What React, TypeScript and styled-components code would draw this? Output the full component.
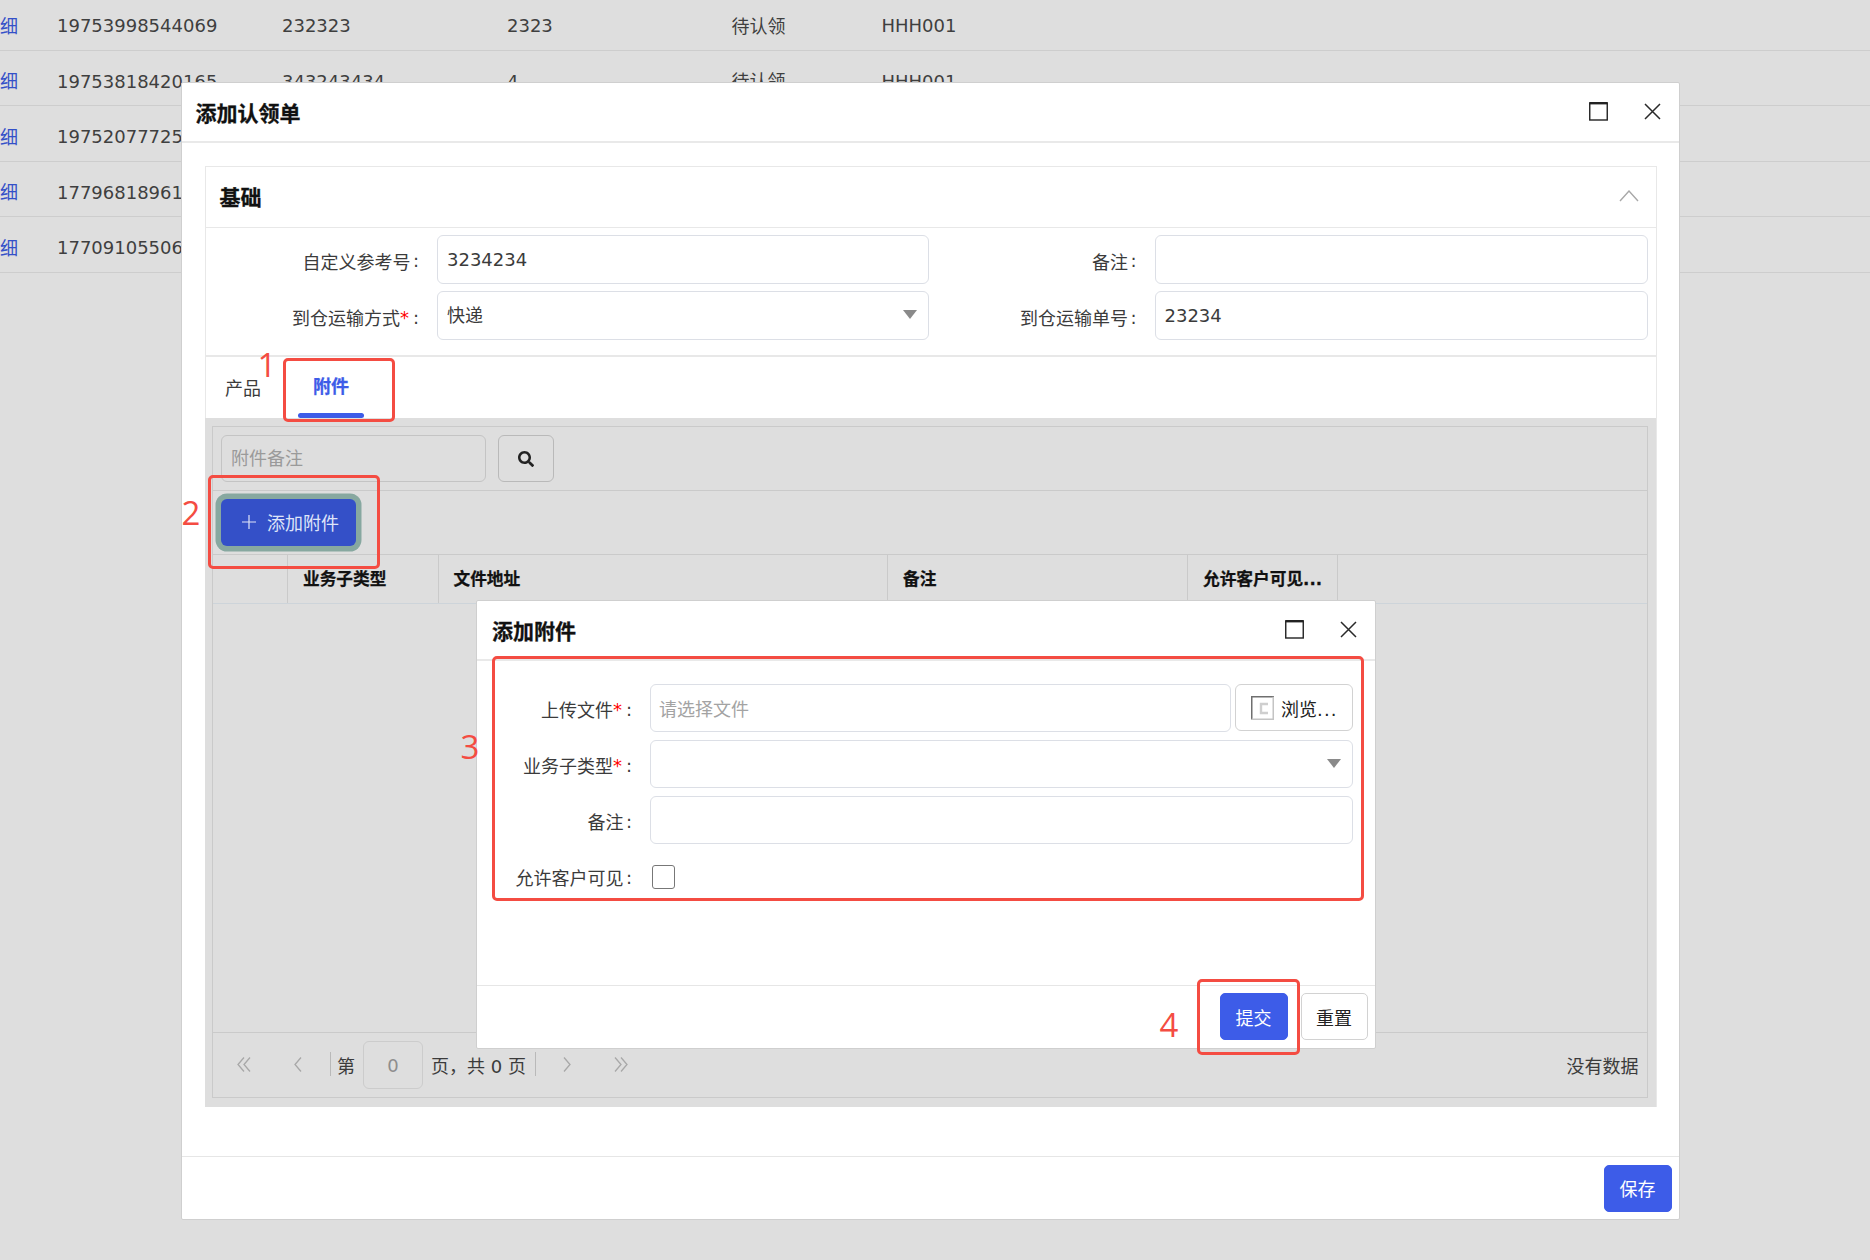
import React from "react";
import styled, { createGlobalStyle } from "styled-components";
import { FaSearch } from "react-icons/fa";

const FONT = `"DejaVu Sans", "Noto Sans CJK SC", sans-serif`;

const Global = createGlobalStyle`
  html, body { margin: 0; padding: 0; background: #dedede; }
  body { font-family: ${FONT}; font-size: 18px; color: #3b3b3b; }
  * { box-sizing: border-box; }
`;

const Page = styled.div`
  position: relative;
  width: 1870px;
  height: 1260px;
  overflow: hidden;
  background: #dedede;
`;

const BackList = styled.div`
  margin-top: -5px;
`;

const BackRow = styled.div`
  display: grid;
  grid-template-columns: 57px 225px 225px 224.5px 150px 1fr;
  align-items: center;
  height: 55.5px;
  padding-top: 7px;
  border-bottom: 1px solid #cdcdcd;
  font-size: 18px;
  color: #3f3f3f;
`;

const BackCjk = styled.span`
  margin-top: -2px;
`;

const BackLink = styled(BackCjk)`
  color: #3450c8;
`;

/* ---------- windows ---------- */
const MainWindow = styled.section`
  position: absolute;
  left: 180.5px;
  top: 81.5px;
  width: 1499px;
  height: 1138.5px;
  display: flex;
  flex-direction: column;
  background: #fff;
  border: 1px solid #cfcfcf;
  border-radius: 2px;
`;

const SubWindow = styled.section`
  position: absolute;
  left: 476px;
  top: 599.5px;
  width: 899.5px;
  height: 449px;
  display: flex;
  flex-direction: column;
  background: #fff;
  border: 1px solid #cfcfcf;
  border-radius: 2px;
`;

const WindowHeader = styled.header`
  flex: none;
  height: 60px;
  display: flex;
  align-items: center;
  padding: 0 18px 0 14px;
  border-bottom: 2px solid #e9e9e9;
`;

const WindowTitle = styled.h2`
  margin: 0;
  font-size: 21px;
  font-weight: 700;
  color: #111;
  -webkit-text-stroke: 0.3px #111;
`;

const SubTitle = styled(WindowTitle)`
  margin-left: 1px;
`;

const WindowTools = styled.div`
  margin-left: auto;
  display: flex;
  align-items: center;
  gap: 36px;
`;

const MainBody = styled.div`
  flex: 1;
  min-height: 0;
  padding: 23.5px 22px 0 23px;
`;

const WindowFooter = styled.footer`
  flex: none;
  height: 63px;
  display: flex;
  align-items: center;
  justify-content: flex-end;
  gap: 13px;
  padding: 0 7px;
  border-top: 1px solid #e6e6e6;
`;

const Button = styled.button<{ $primary?: boolean }>`
  width: ${(p) => (p.$primary ? "68px" : "67px")};
  height: 47px;
  padding: 0;
  font-family: ${FONT};
  font-size: 18px;
  border-radius: 5px;
  color: ${(p) => (p.$primary ? "#fff" : "#222")};
  background: ${(p) => (p.$primary ? "#3d5ce8" : "#fff")};
  border: 1px solid ${(p) => (p.$primary ? "#3d5ce8" : "#d2d2d2")};
`;

/* ---------- base panel ---------- */
const Panel = styled.div`
  border: 1px solid #e8e8e8;
  border-bottom: none;
`;

const PanelHeader = styled.div`
  height: 60.5px;
  display: flex;
  align-items: center;
  justify-content: space-between;
  padding: 0 17px 1px 14px;
  border-bottom: 1px solid #e8e8e8;
`;

const PanelTitle = styled.h3`
  margin: 0;
  font-size: 21px;
  font-weight: 700;
  color: #111;
  -webkit-text-stroke: 0.3px #111;
`;

const PanelForm = styled.div`
  display: grid;
  grid-template-columns: 231.5px 491.5px 226px 493px;
  grid-auto-rows: 48.6px;
  row-gap: 7.7px;
  padding: 7.5px 0 15.5px;
  border-bottom: 2px solid #e8e8e8;
`;

const Label = styled.label`
  display: flex;
  align-items: center;
  justify-content: flex-end;
  padding: 3px 18px 0 0;
  font-size: 18px;
  color: #3b3b3b;
  white-space: nowrap;
`;

const Req = styled.span`
  color: #f00;
  margin-right: 1.5px;
`;

const Colon = styled.span`
  margin-left: 2.5px;
`;

const TextInput = styled.input`
  width: 100%;
  height: 100%;
  padding: 0 9px;
  border: 1px solid #dcdfe6;
  border-radius: 6px;
  background: #fff;
  outline: none;
  font-family: ${FONT};
  font-size: 18px;
  color: #3b3b3b;
  &::placeholder { color: #a3a3a3; opacity: 1; }
`;

const FileInput = styled(TextInput)`
  padding: 3px 8px 0;
`;

const SelectBox = styled.div`
  position: relative;
  display: flex;
  align-items: center;
  height: 100%;
  padding: 0 9px 3px;
  border: 1px solid #dcdfe6;
  border-radius: 6px;
  background: #fff;
  font-size: 18px;
  color: #3b3b3b;
  &::after {
    content: "";
    position: absolute;
    right: 11px;
    top: 18px;
    border-left: 7px solid transparent;
    border-right: 7px solid transparent;
    border-top: 9px solid #8a8a8a;
  }
`;

/* ---------- tabs ---------- */
const TabStrip = styled.div`
  height: 61px;
  display: flex;
  gap: 22px;
  padding-left: 4.5px;
`;

const Tab = styled.div<{ $active?: boolean }>`
  position: relative;
  width: 66px;
  display: flex;
  align-items: center;
  justify-content: center;
  padding-bottom: ${(p) => (p.$active ? "5px" : "1px")};
  font-size: 18px;
  font-weight: ${(p) => (p.$active ? 700 : 400)};
  color: ${(p) => (p.$active ? "#3d5ce8" : "#3b3b3b")};
  ${(p) =>
    p.$active &&
    `-webkit-text-stroke: 0.25px #3d5ce8;
    &::after {
      content: "";
      position: absolute;
      left: 0;
      right: 0;
      bottom: 0;
      height: 5px;
      border-radius: 3px;
      background: #3d5ce8;
    }`}
`;

const TabPane = styled.div`
  width: 1451px;
  height: 689px;
  margin-left: -1px;
  padding: 8px 8px 9px 7.5px;
  background: #dedede;
`;

const Grid = styled.div`
  height: 100%;
  display: flex;
  flex-direction: column;
  border: 1px solid #cacaca;
`;

const SearchBar = styled.div`
  flex: none;
  height: 64px;
  display: flex;
  gap: 11.5px;
  padding: 8px 8px 0;
  border-bottom: 1px solid #cacaca;
`;

const SearchInput = styled.input`
  width: 265px;
  height: 47px;
  padding: 0 9px;
  background: transparent;
  border: 1px solid #c4c4c4;
  border-radius: 6px;
  outline: none;
  font-family: ${FONT};
  font-size: 18px;
  &::placeholder { color: #9a9a9a; opacity: 1; }
`;

const SearchButton = styled.button`
  width: 56px;
  height: 47px;
  display: flex;
  align-items: center;
  justify-content: center;
  background: transparent;
  border: 1px solid #b9b9b9;
  border-radius: 6px;
  color: #222;
`;

const ActionBar = styled.div`
  flex: none;
  height: 64px;
  display: flex;
  align-items: center;
  padding-left: 8px;
  border-bottom: 1px solid #cacaca;
`;

const AddButton = styled.button`
  width: 134.6px;
  height: 47px;
  display: flex;
  align-items: center;
  justify-content: flex-start;
  gap: 11px;
  padding: 0 0 1.5px 21px;
  background: #3450c8;
  border: none;
  border-radius: 6px;
  box-shadow: 0 0 0 5.5px #87a8a0;
  color: #dfe4f8;
  font-family: ${FONT};
  font-size: 18px;
`;

const HeadRow = styled.div`
  flex: none;
  height: 48.5px;
  display: grid;
  grid-template-columns: 75px 150.5px 449.5px 300px 150px 1fr;
  border-bottom: 1px solid #cdd4da;
`;

const HeadCell = styled.div`
  display: flex;
  align-items: center;
  padding: 0 0 2px 15px;
  border-right: 1px solid #cacaca;
  font-size: 16.7px;
  font-weight: 700;
  color: #111;
  -webkit-text-stroke: 0.25px #111;
  white-space: nowrap;
  overflow: hidden;
  &:last-child { border-right: none; }
`;

const GridBody = styled.div`
  flex: 1;
  min-height: 0;
`;

const Pager = styled.div`
  flex: none;
  height: 65px;
  display: flex;
  align-items: center;
  padding: 0 8px 0 4px;
  border-top: 1px solid #cacaca;
  font-size: 18px;
  color: #3b3b3b;
`;

const PagerButton = styled.span`
  width: 54px;
  height: 24px;
  margin-top: -2px;
  display: flex;
  align-items: center;
  justify-content: center;
  color: #a8a8a8;
`;

const PagerSep = styled.span<{ $tight?: boolean }>`
  width: 1px;
  height: 24px;
  margin: -2px ${(p) => (p.$tight ? "4px" : "6px")} 0 ${(p) => (p.$tight ? "0" : "5px")};
  background: #b9b9b9;
`;

const PageInput = styled.input`
  width: 60px;
  height: 48px;
  margin: 0 8px;
  padding: 0;
  text-align: center;
  background: transparent;
  border: 1px solid #cccccc;
  border-radius: 6px;
  outline: none;
  font-family: ${FONT};
  font-size: 18px;
  color: #8e8e8e;
`;

const PagerInfo = styled.span`
  white-space: nowrap;
  margin-right: 9.5px;
`;

const PagerStatus = styled.span`
  margin-left: auto;
`;

/* ---------- attachment form ---------- */
const SubForm = styled.div`
  flex: 1;
  min-height: 0;
  display: grid;
  grid-template-columns: 173px 702.5px;
  grid-auto-rows: 47.5px;
  row-gap: 8.5px;
  align-content: start;
  padding-top: 23.5px;
`;

const FileRow = styled.div`
  display: grid;
  grid-template-columns: 581px 117.5px;
  column-gap: 4px;
`;

const BrowseButton = styled.button`
  display: flex;
  align-items: center;
  gap: 7px;
  height: 47px;
  padding: 0 0 0 15px;
  background: #fff;
  border: 1px solid #d2d2d2;
  border-radius: 6px;
  font-family: ${FONT};
  font-size: 18px;
  color: #222;
  white-space: nowrap;
`;

const Dots = styled.span`
  letter-spacing: 1.2px;
`;

const CheckCell = styled.div`
  display: flex;
  align-items: flex-start;
  padding: 12.5px 0 0 1.5px;
`;

const Check = styled.input`
  appearance: none;
  width: 23.5px;
  height: 24px;
  margin: 0;
  background: #fff;
  border: 1px solid #777;
  border-radius: 3px;
`;

/* ---------- red annotations ---------- */
const Mark = styled.div<{ $x: number; $y: number; $w: number; $h: number }>`
  position: absolute;
  left: ${(p) => p.$x}px;
  top: ${(p) => p.$y}px;
  width: ${(p) => p.$w}px;
  height: ${(p) => p.$h}px;
  border: 3.5px solid #f44c42;
  border-radius: 5px;
  pointer-events: none;
`;

const MarkNo = styled.span<{ $x: number; $y: number }>`
  position: absolute;
  left: ${(p) => p.$x}px;
  top: ${(p) => p.$y}px;
  transform: translate(-50%, -50%);
  font-family: "Open Sans", sans-serif;
  font-size: 33px;
  line-height: 1;
  color: #f44c42;
  pointer-events: none;
`;

/* ---------- drawings ---------- */
const MaxIcon = () => (
  <svg width="19" height="19" viewBox="0 0 19 19" fill="none" stroke="#222">
    <rect x="0.75" y="1" width="17.5" height="17" strokeWidth="1.4" />
    <line x1="0.5" y1="1.2" x2="18.5" y2="1.2" strokeWidth="2.4" />
  </svg>
);

const CloseIcon = () => (
  <svg width="17" height="17" viewBox="0 0 17 17" fill="none" stroke="#2a2a2a" strokeWidth="1.5">
    <path d="M1 1 L16 16 M16 1 L1 16" />
  </svg>
);

const ChevronUp = () => (
  <svg width="20" height="12" viewBox="0 0 20 12" fill="none" stroke="#a8a8a8" strokeWidth="1.4">
    <path d="M1 11 L10 1 L19 11" />
  </svg>
);

const Chevron = ({ dir, double }: { dir: "l" | "r"; double?: boolean }) => (
  <svg width="14" height="15" viewBox="0 0 14 15" fill="none" stroke="currentColor" strokeWidth="1.3">
    {dir === "l" ? (
      <>
        <path d={double ? "M7 0.5 L1 7.5 L7 14.5" : "M10 0.5 L4 7.5 L10 14.5"} />
        {double && <path d="M13 0.5 L7 7.5 L13 14.5" />}
      </>
    ) : (
      <>
        <path d={double ? "M7 0.5 L13 7.5 L7 14.5" : "M4 0.5 L10 7.5 L4 14.5"} />
        {double && <path d="M1 0.5 L7 7.5 L1 14.5" />}
      </>
    )}
  </svg>
);

const PlusIcon = () => (
  <svg width="14" height="14" viewBox="0 0 14 14" stroke="#dfe4f8" strokeWidth="1.2">
    <path d="M7 0 V14 M0 7 H14" />
  </svg>
);

const FileIcon = () => (
  <svg width="23" height="24" viewBox="0 0 23 24" fill="none">
    <path d="M0.75 23.5 V0.75 H23" stroke="#6f6f6f" strokeWidth="1.5" />
    <path d="M22.25 0.75 V23.25 H0.75" stroke="#c4c4c4" strokeWidth="1.5" />
    <path d="M17 8 H10 V17 H17" stroke="#cfcfcf" strokeWidth="2.4" />
  </svg>
);

const rows = [
  ["19753998544069", "232323", "2323", "待认领", "HHH001"],
  ["19753818420165", "343243434", "4", "待认领", "HHH001"],
  ["19752077725148"],
  ["17796818961320"],
  ["17709105506217"],
];

export default function App() {
  return (
    <Page>
      <Global />
      <BackList>
        {rows.map((r) => (
          <BackRow key={r[0]}>
            <BackLink>细</BackLink>
            {r.map((c, i) => (i === 3 ? <BackCjk key={i}>{c}</BackCjk> : <span key={i}>{c}</span>))}
          </BackRow>
        ))}
      </BackList>

      <MainWindow>
        <WindowHeader>
          <WindowTitle>添加认领单</WindowTitle>
          <WindowTools>
            <MaxIcon />
            <CloseIcon />
          </WindowTools>
        </WindowHeader>
        <MainBody>
          <Panel>
            <PanelHeader>
              <PanelTitle>基础</PanelTitle>
              <ChevronUp />
            </PanelHeader>
            <PanelForm>
              <Label>
                自定义参考号<Colon>:</Colon>
              </Label>
              <TextInput readOnly value="3234234" />
              <Label>
                备注<Colon>:</Colon>
              </Label>
              <TextInput readOnly value="" />
              <Label>
                到仓运输方式<Req>*</Req>
                <Colon>:</Colon>
              </Label>
              <SelectBox>快递</SelectBox>
              <Label>
                到仓运输单号<Colon>:</Colon>
              </Label>
              <TextInput readOnly value="23234" />
            </PanelForm>
            <TabStrip>
              <Tab>产品</Tab>
              <Tab $active>附件</Tab>
            </TabStrip>
            <TabPane>
              <Grid>
                <SearchBar>
                  <SearchInput readOnly placeholder="附件备注" />
                  <SearchButton>
                    <FaSearch size={16} />
                  </SearchButton>
                </SearchBar>
                <ActionBar>
                  <AddButton>
                    <PlusIcon />
                    <span>添加附件</span>
                  </AddButton>
                </ActionBar>
                <HeadRow>
                  <HeadCell />
                  <HeadCell>业务子类型</HeadCell>
                  <HeadCell>文件地址</HeadCell>
                  <HeadCell>备注</HeadCell>
                  <HeadCell>允许客户可见...</HeadCell>
                  <HeadCell />
                </HeadRow>
                <GridBody />
                <Pager>
                  <PagerButton>
                    <Chevron dir="l" double />
                  </PagerButton>
                  <PagerButton>
                    <Chevron dir="l" />
                  </PagerButton>
                  <PagerSep />
                  <span>第</span>
                  <PageInput readOnly value="0" />
                  <PagerInfo>页，共 0 页</PagerInfo>
                  <PagerSep $tight />
                  <PagerButton>
                    <Chevron dir="r" />
                  </PagerButton>
                  <PagerButton>
                    <Chevron dir="r" double />
                  </PagerButton>
                  <PagerStatus>没有数据</PagerStatus>
                </Pager>
              </Grid>
            </TabPane>
          </Panel>
        </MainBody>
        <WindowFooter>
          <Button $primary>保存</Button>
        </WindowFooter>
      </MainWindow>

      <SubWindow>
        <WindowHeader>
          <SubTitle>添加附件</SubTitle>
          <WindowTools>
            <MaxIcon />
            <CloseIcon />
          </WindowTools>
        </WindowHeader>
        <SubForm>
          <Label>
            上传文件<Req>*</Req>
            <Colon>:</Colon>
          </Label>
          <FileRow>
            <FileInput readOnly placeholder="请选择文件" />
            <BrowseButton>
              <FileIcon />
              <span>
                浏览<Dots>...</Dots>
              </span>
            </BrowseButton>
          </FileRow>
          <Label>
            业务子类型<Req>*</Req>
            <Colon>:</Colon>
          </Label>
          <SelectBox />
          <Label>
            备注<Colon>:</Colon>
          </Label>
          <TextInput readOnly value="" />
          <Label>
            允许客户可见<Colon>:</Colon>
          </Label>
          <CheckCell>
            <Check type="checkbox" readOnly />
          </CheckCell>
        </SubForm>
        <WindowFooter>
          <Button $primary>提交</Button>
          <Button>重置</Button>
        </WindowFooter>
      </SubWindow>

      <Mark $x={283} $y={358} $w={112} $h={64} />
      <Mark $x={208} $y={474.5} $w={171.5} $h={94} />
      <Mark $x={492} $y={656} $w={872} $h={245} />
      <Mark $x={1197} $y={979} $w={103} $h={76} />
      <MarkNo $x={267} $y={364}>1</MarkNo>
      <MarkNo $x={191} $y={512}>2</MarkNo>
      <MarkNo $x={470} $y={746}>3</MarkNo>
      <MarkNo $x={1169} $y={1024}>4</MarkNo>
    </Page>
  );
}
